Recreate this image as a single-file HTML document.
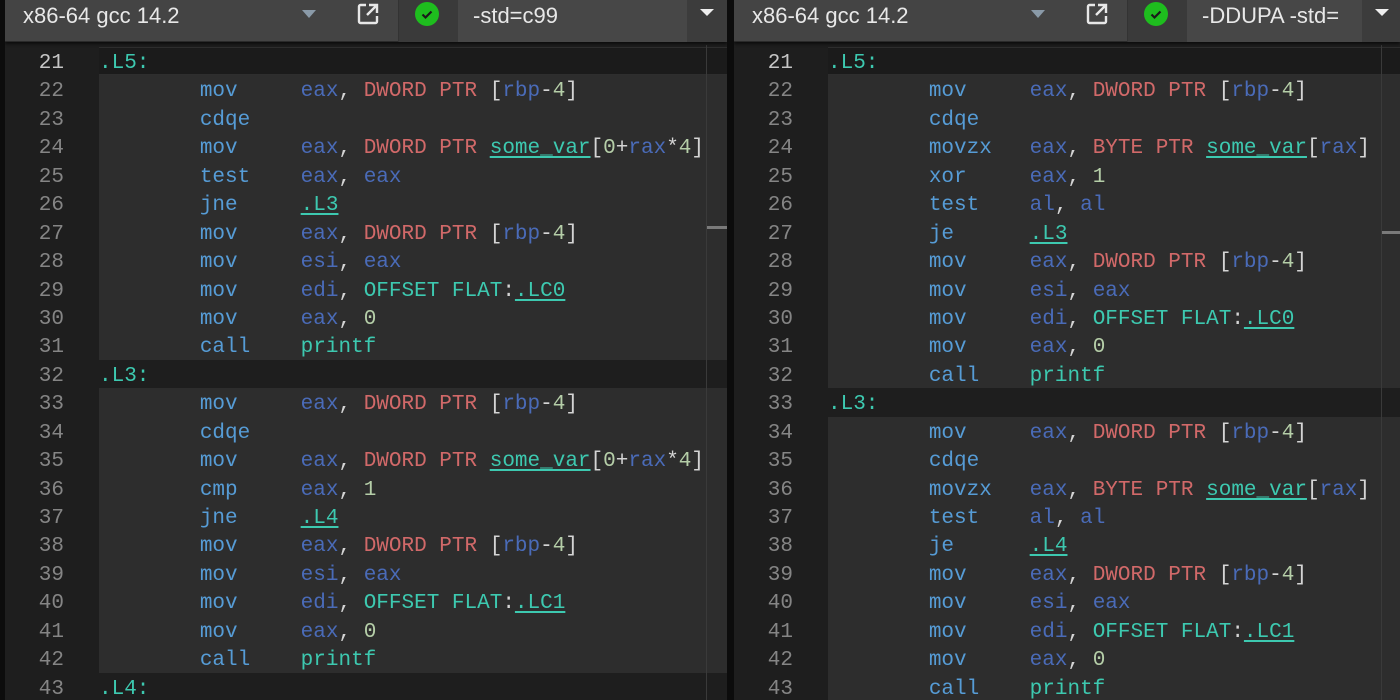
<!DOCTYPE html>
<html><head><meta charset="utf-8"><style>
*{margin:0;padding:0;box-sizing:border-box}
html,body{overflow:hidden}
body{width:1400px;height:700px;background:#0c0c0c;overflow:hidden;position:relative;font-family:"Liberation Sans",sans-serif}
.pane{position:absolute;top:0;height:700px;background:#1e1e1e;overflow:hidden}
.hdr{position:absolute;left:0;top:0;right:0;height:42px;background:#444;border-bottom:1px solid #2a2a2a;box-shadow:0 2px 3px rgba(0,0,0,.6)}
.hdr .t{position:absolute;top:1px;font-size:22px;color:#e8e8e8;line-height:30px}
.tri{position:absolute;width:0;height:0;border-left:7px solid transparent;border-right:7px solid transparent;border-top:8px solid #8a9aa8}
.chk{position:absolute;top:0;height:42px;background:#3a3a3a;border-left:1px solid #333}
.dot{position:absolute;width:24px;height:24px;border-radius:50%;background:#1ebd1e;top:2px}
.opt{position:absolute;top:0;height:42px;background:#474747}
.btn{position:absolute;top:0;height:42px;background:#3c3c3c}
.btn i{position:absolute;top:9px;left:13px;border-left:7px solid transparent;border-right:7px solid transparent;border-top:7px solid #eee}
.gut{position:absolute;left:0;top:45px;height:700px;background:#1e1e1e}
.code{position:absolute;top:47px;left:0;right:0;font-family:"Liberation Mono","DejaVu Sans Mono",monospace;font-size:21px}
.ln{height:28.45px;line-height:28.45px;white-space:pre;position:relative}
.ln .no{position:absolute;left:0;top:3px;width:59px;text-align:right;color:#858585}
.ln .c{position:absolute;top:0;bottom:0;right:0;background:#2d2d2d;color:#d4d4d4;padding-top:3px}
.ln.lab .c{background:#1e1e1e}
.ln.cur .c{background:#1b1b1b;border-top:1px solid #2e2e2e;border-bottom:1px solid #2e2e2e;padding-top:2px}
.ln.cur .no{color:#c6c6c6}
.k{color:#569cd6}.r{color:#4a6bb8}.p{color:#d16969}.n{color:#b5cea8}.l{color:#3dc9b0}.u{color:#3dc9b0;text-decoration:underline;text-underline-offset:3px}
.ruler{position:absolute;top:45px;width:1px;height:655px;background:#3a3a3a}
.mark{position:absolute;height:3px;background:#7a7a7a}
</style></head><body>

<div class="pane" style="left:5px;width:722px">
  <div class="gut" style="width:94px"></div>
  <div class="code">
<div class="ln lab cur"><span class="no">21</span><div class="c" style="left:94px"><span class="l">.L5:</span></div></div>
<div class="ln"><span class="no">22</span><div class="c" style="left:94px">        <span class="k">mov</span>     <span class="r">eax</span>, <span class="p">DWORD PTR</span> [<span class="r">rbp</span>-<span class="n">4</span>]</div></div>
<div class="ln"><span class="no">23</span><div class="c" style="left:94px">        <span class="k">cdqe</span></div></div>
<div class="ln"><span class="no">24</span><div class="c" style="left:94px">        <span class="k">mov</span>     <span class="r">eax</span>, <span class="p">DWORD PTR</span> <span class="u">some_var</span>[<span class="n">0</span>+<span class="r">rax</span>*<span class="n">4</span>]</div></div>
<div class="ln"><span class="no">25</span><div class="c" style="left:94px">        <span class="k">test</span>    <span class="r">eax</span>, <span class="r">eax</span></div></div>
<div class="ln"><span class="no">26</span><div class="c" style="left:94px">        <span class="k">jne</span>     <span class="u">.L3</span></div></div>
<div class="ln"><span class="no">27</span><div class="c" style="left:94px">        <span class="k">mov</span>     <span class="r">eax</span>, <span class="p">DWORD PTR</span> [<span class="r">rbp</span>-<span class="n">4</span>]</div></div>
<div class="ln"><span class="no">28</span><div class="c" style="left:94px">        <span class="k">mov</span>     <span class="r">esi</span>, <span class="r">eax</span></div></div>
<div class="ln"><span class="no">29</span><div class="c" style="left:94px">        <span class="k">mov</span>     <span class="r">edi</span>, <span class="l">OFFSET FLAT</span>:<span class="u">.LC0</span></div></div>
<div class="ln"><span class="no">30</span><div class="c" style="left:94px">        <span class="k">mov</span>     <span class="r">eax</span>, <span class="n">0</span></div></div>
<div class="ln"><span class="no">31</span><div class="c" style="left:94px">        <span class="k">call</span>    <span class="l">printf</span></div></div>
<div class="ln lab"><span class="no">32</span><div class="c" style="left:94px"><span class="l">.L3:</span></div></div>
<div class="ln"><span class="no">33</span><div class="c" style="left:94px">        <span class="k">mov</span>     <span class="r">eax</span>, <span class="p">DWORD PTR</span> [<span class="r">rbp</span>-<span class="n">4</span>]</div></div>
<div class="ln"><span class="no">34</span><div class="c" style="left:94px">        <span class="k">cdqe</span></div></div>
<div class="ln"><span class="no">35</span><div class="c" style="left:94px">        <span class="k">mov</span>     <span class="r">eax</span>, <span class="p">DWORD PTR</span> <span class="u">some_var</span>[<span class="n">0</span>+<span class="r">rax</span>*<span class="n">4</span>]</div></div>
<div class="ln"><span class="no">36</span><div class="c" style="left:94px">        <span class="k">cmp</span>     <span class="r">eax</span>, <span class="n">1</span></div></div>
<div class="ln"><span class="no">37</span><div class="c" style="left:94px">        <span class="k">jne</span>     <span class="u">.L4</span></div></div>
<div class="ln"><span class="no">38</span><div class="c" style="left:94px">        <span class="k">mov</span>     <span class="r">eax</span>, <span class="p">DWORD PTR</span> [<span class="r">rbp</span>-<span class="n">4</span>]</div></div>
<div class="ln"><span class="no">39</span><div class="c" style="left:94px">        <span class="k">mov</span>     <span class="r">esi</span>, <span class="r">eax</span></div></div>
<div class="ln"><span class="no">40</span><div class="c" style="left:94px">        <span class="k">mov</span>     <span class="r">edi</span>, <span class="l">OFFSET FLAT</span>:<span class="u">.LC1</span></div></div>
<div class="ln"><span class="no">41</span><div class="c" style="left:94px">        <span class="k">mov</span>     <span class="r">eax</span>, <span class="n">0</span></div></div>
<div class="ln"><span class="no">42</span><div class="c" style="left:94px">        <span class="k">call</span>    <span class="l">printf</span></div></div>
<div class="ln lab"><span class="no">43</span><div class="c" style="left:94px"><span class="l">.L4:</span></div></div>
  </div>
  <div class="ruler" style="left:701px"></div>
  <div class="mark" style="left:702px;width:20px;top:226px"></div>
  <div class="hdr">
    <div class="t" style="left:18px">x86-64 gcc 14.2</div>
    <div class="tri" style="left:297px;top:10px"></div>
    <svg style="position:absolute;left:352px;top:3px" width="22" height="22" viewBox="0 0 22 22" fill="none" stroke="#e8e8e8" stroke-width="2.4"><path d="M9 2H3.5A1.5 1.5 0 0 0 2 3.5v15A1.5 1.5 0 0 0 3.5 20h15a1.5 1.5 0 0 0 1.5-1.5V13"/><path d="M12 2h8v8M20 2 10 12"/></svg>
    <div class="chk" style="left:393px;width:60px"><div class="dot" style="left:16px"><svg width="24" height="24" viewBox="0 0 24 24"><path d="M7.5 12.5l3 3 6-6" stroke="#1a1a1a" stroke-width="2.2" fill="none"/></svg></div></div>
    <div class="opt" style="left:453px;width:229px"><div class="t" style="left:15px">-std=c99</div></div>
    <div class="btn" style="left:682px;width:40px"><i></i></div>
  </div>
</div>

<div class="pane" style="left:734px;width:666px">
  <div class="gut" style="width:94px"></div>
  <div class="code">
<div class="ln lab cur"><span class="no">21</span><div class="c" style="left:94px"><span class="l">.L5:</span></div></div>
<div class="ln"><span class="no">22</span><div class="c" style="left:94px">        <span class="k">mov</span>     <span class="r">eax</span>, <span class="p">DWORD PTR</span> [<span class="r">rbp</span>-<span class="n">4</span>]</div></div>
<div class="ln"><span class="no">23</span><div class="c" style="left:94px">        <span class="k">cdqe</span></div></div>
<div class="ln"><span class="no">24</span><div class="c" style="left:94px">        <span class="k">movzx</span>   <span class="r">eax</span>, <span class="p">BYTE PTR</span> <span class="u">some_var</span>[<span class="r">rax</span>]</div></div>
<div class="ln"><span class="no">25</span><div class="c" style="left:94px">        <span class="k">xor</span>     <span class="r">eax</span>, <span class="n">1</span></div></div>
<div class="ln"><span class="no">26</span><div class="c" style="left:94px">        <span class="k">test</span>    <span class="r">al</span>, <span class="r">al</span></div></div>
<div class="ln"><span class="no">27</span><div class="c" style="left:94px">        <span class="k">je</span>      <span class="u">.L3</span></div></div>
<div class="ln"><span class="no">28</span><div class="c" style="left:94px">        <span class="k">mov</span>     <span class="r">eax</span>, <span class="p">DWORD PTR</span> [<span class="r">rbp</span>-<span class="n">4</span>]</div></div>
<div class="ln"><span class="no">29</span><div class="c" style="left:94px">        <span class="k">mov</span>     <span class="r">esi</span>, <span class="r">eax</span></div></div>
<div class="ln"><span class="no">30</span><div class="c" style="left:94px">        <span class="k">mov</span>     <span class="r">edi</span>, <span class="l">OFFSET FLAT</span>:<span class="u">.LC0</span></div></div>
<div class="ln"><span class="no">31</span><div class="c" style="left:94px">        <span class="k">mov</span>     <span class="r">eax</span>, <span class="n">0</span></div></div>
<div class="ln"><span class="no">32</span><div class="c" style="left:94px">        <span class="k">call</span>    <span class="l">printf</span></div></div>
<div class="ln lab"><span class="no">33</span><div class="c" style="left:94px"><span class="l">.L3:</span></div></div>
<div class="ln"><span class="no">34</span><div class="c" style="left:94px">        <span class="k">mov</span>     <span class="r">eax</span>, <span class="p">DWORD PTR</span> [<span class="r">rbp</span>-<span class="n">4</span>]</div></div>
<div class="ln"><span class="no">35</span><div class="c" style="left:94px">        <span class="k">cdqe</span></div></div>
<div class="ln"><span class="no">36</span><div class="c" style="left:94px">        <span class="k">movzx</span>   <span class="r">eax</span>, <span class="p">BYTE PTR</span> <span class="u">some_var</span>[<span class="r">rax</span>]</div></div>
<div class="ln"><span class="no">37</span><div class="c" style="left:94px">        <span class="k">test</span>    <span class="r">al</span>, <span class="r">al</span></div></div>
<div class="ln"><span class="no">38</span><div class="c" style="left:94px">        <span class="k">je</span>      <span class="u">.L4</span></div></div>
<div class="ln"><span class="no">39</span><div class="c" style="left:94px">        <span class="k">mov</span>     <span class="r">eax</span>, <span class="p">DWORD PTR</span> [<span class="r">rbp</span>-<span class="n">4</span>]</div></div>
<div class="ln"><span class="no">40</span><div class="c" style="left:94px">        <span class="k">mov</span>     <span class="r">esi</span>, <span class="r">eax</span></div></div>
<div class="ln"><span class="no">41</span><div class="c" style="left:94px">        <span class="k">mov</span>     <span class="r">edi</span>, <span class="l">OFFSET FLAT</span>:<span class="u">.LC1</span></div></div>
<div class="ln"><span class="no">42</span><div class="c" style="left:94px">        <span class="k">mov</span>     <span class="r">eax</span>, <span class="n">0</span></div></div>
<div class="ln"><span class="no">43</span><div class="c" style="left:94px">        <span class="k">call</span>    <span class="l">printf</span></div></div>
  </div>
  <div class="ruler" style="left:647px"></div>
  <div class="mark" style="left:648px;width:18px;top:231px"></div>
  <div class="hdr">
    <div class="t" style="left:18px">x86-64 gcc 14.2</div>
    <div class="tri" style="left:297px;top:10px"></div>
    <svg style="position:absolute;left:352px;top:3px" width="22" height="22" viewBox="0 0 22 22" fill="none" stroke="#e8e8e8" stroke-width="2.4"><path d="M9 2H3.5A1.5 1.5 0 0 0 2 3.5v15A1.5 1.5 0 0 0 3.5 20h15a1.5 1.5 0 0 0 1.5-1.5V13"/><path d="M12 2h8v8M20 2 10 12"/></svg>
    <div class="chk" style="left:393px;width:60px"><div class="dot" style="left:16px"><svg width="24" height="24" viewBox="0 0 24 24"><path d="M7.5 12.5l3 3 6-6" stroke="#1a1a1a" stroke-width="2.2" fill="none"/></svg></div></div>
    <div class="opt" style="left:453px;width:175px"><div class="t" style="left:15px">-DDUPA -std=</div></div>
    <div class="btn" style="left:628px;width:38px"><i></i></div>
  </div>
</div>

</body></html>
